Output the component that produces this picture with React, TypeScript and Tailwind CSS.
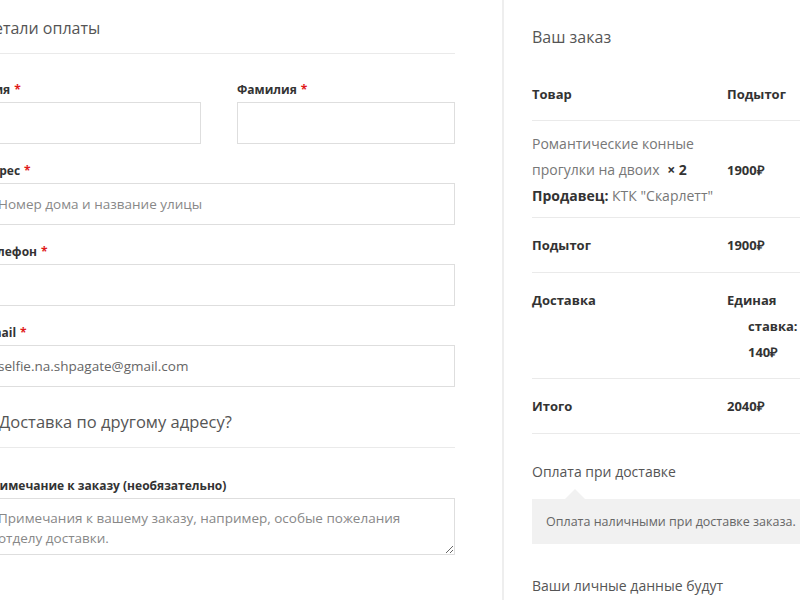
const font = { fontFamily: '"Open Sans", "Liberation Sans", sans-serif' };

function Label({ text, required = true }: { text: string; required?: boolean }) {
  return (
    <label className="mb-[2px] block text-[12px] font-bold leading-[20px] text-[#333]">
      {text}
      {required && <span className="ml-[4px] text-[#e01a1a]">*</span>}
    </label>
  );
}

function Field({
  label,
  placeholder,
  value,
  className = "",
}: {
  label: string;
  placeholder?: string;
  value?: string;
  className?: string;
}) {
  return (
    <div className={className}>
      <Label text={label} />
      <input
        type="text"
        readOnly
        placeholder={placeholder}
        defaultValue={value}
        className="block h-[42px] w-full border border-[#dedede] bg-white px-[14px] text-[13.5px] text-[#666] outline-none placeholder:text-[#888]"
      />
    </div>
  );
}

export default function App() {
  return (
    <div className="flex h-[600px] w-[800px] overflow-hidden bg-white" style={font}>
      {/* Billing form */}
      <div className="ml-[-17px] w-[472px] shrink-0">
        <h3 className="pt-[15px] pb-[12px] text-[16px] font-normal leading-[26px] text-[#555]">
          Детали оплаты
        </h3>
        <div className="border-b border-[#eaeaea]" />

        <div className="mt-[26px] flex gap-[36px]">
          <Field label="Имя" className="flex-1" />
          <Field label="Фамилия" className="flex-1" />
        </div>
        <Field label="Адрес" placeholder="Номер дома и название улицы" className="mt-[17px]" />
        <Field label="Телефон" className="mt-[17px]" />
        <Field label="Email" value="selfie.na.shpagate@gmail.com" className="mt-[17px]" />

        <h3 className="mt-[23px] flex items-center gap-[3px] pb-[13px] text-[16.5px] font-normal leading-[24px] text-[#555]">
          <input type="checkbox" className="h-[13px] w-[13px]" />
          Доставка по другому адресу?
        </h3>
        <div className="border-b border-[#eaeaea]" />

        <div className="mt-[28px]">
          <label className="mb-[2px] block text-[12px] font-bold leading-[20px] text-[#333]">
            Примечание к заказу (необязательно)
          </label>
          <textarea
            readOnly
            placeholder="Примечания к вашему заказу, например, особые пожелания отделу доставки."
            className="block h-[57px] w-full border border-[#dedede] bg-white px-[14px] py-[9px] text-[13.5px] leading-[20px] text-[#666] outline-none placeholder:text-[#888]"
          />
        </div>
      </div>

      {/* Order review */}
      <div className="ml-[47px] w-[340px] shrink-0 border-l-2 border-[#eeeeee] pl-[28px]">
        <h3 className="pt-[24px] text-[16px] font-normal leading-[26px] text-[#555]">Ваш заказ</h3>

        <div className="mt-[31px] grid grid-cols-[195px_1fr] border-b border-[#eaeaea] pb-[13px] text-[13px] font-bold leading-[26px] text-[#333]">
          <div>Товар</div>
          <div>Подытог</div>
        </div>

        <div className="grid grid-cols-[195px_1fr] border-b border-[#eaeaea] pt-[10px] pb-[8px] text-[14px] leading-[26px] text-[#777]">
          <div>
            Романтические конные прогулки на двоих{" "}
            <strong className="ml-[4px] font-bold text-[#333]">× 2</strong>
            <div>
              <span className="font-bold text-[#333]">Продавец:</span> КТК "Скарлетт"
            </div>
          </div>
          <div className="self-center text-[13px] font-bold text-[#333]">1900₽</div>
        </div>

        <div className="grid grid-cols-[195px_1fr] border-b border-[#eaeaea] py-[14px] text-[13px] font-bold leading-[26px] text-[#333]">
          <div>Подытог</div>
          <div>1900₽</div>
        </div>

        <div className="grid grid-cols-[195px_1fr] border-b border-[#eaeaea] pt-[14px] pb-[13px] text-[13px] font-bold leading-[26px] text-[#333]">
          <div>Доставка</div>
          <div className="w-[75px] pl-[21px] indent-[-21px]">Единая ставка: 140₽</div>
        </div>

        <div className="grid grid-cols-[195px_1fr] border-b border-[#eaeaea] py-[14px] text-[13px] font-bold leading-[26px] text-[#333]">
          <div>Итого</div>
          <div>2040₽</div>
        </div>

        <div className="mt-[26px] text-[14px] leading-[24px] text-[#555]">Оплата при доставке</div>
        <div className="relative mt-[15px] bg-[#f1f1f1] px-[14px] py-[12px] text-[12.5px] leading-[21px] text-[#666]">
          <span className="absolute left-[33px] top-[-10px] h-0 w-0 border-x-[10px] border-b-[10px] border-x-transparent border-b-[#f1f1f1]" />
          Оплата наличными при доставке заказа.
        </div>

        <p className="mt-[30px] text-[14px] leading-[24px] text-[#555]">Ваши личные данные будут</p>
      </div>
    </div>
  );
}
